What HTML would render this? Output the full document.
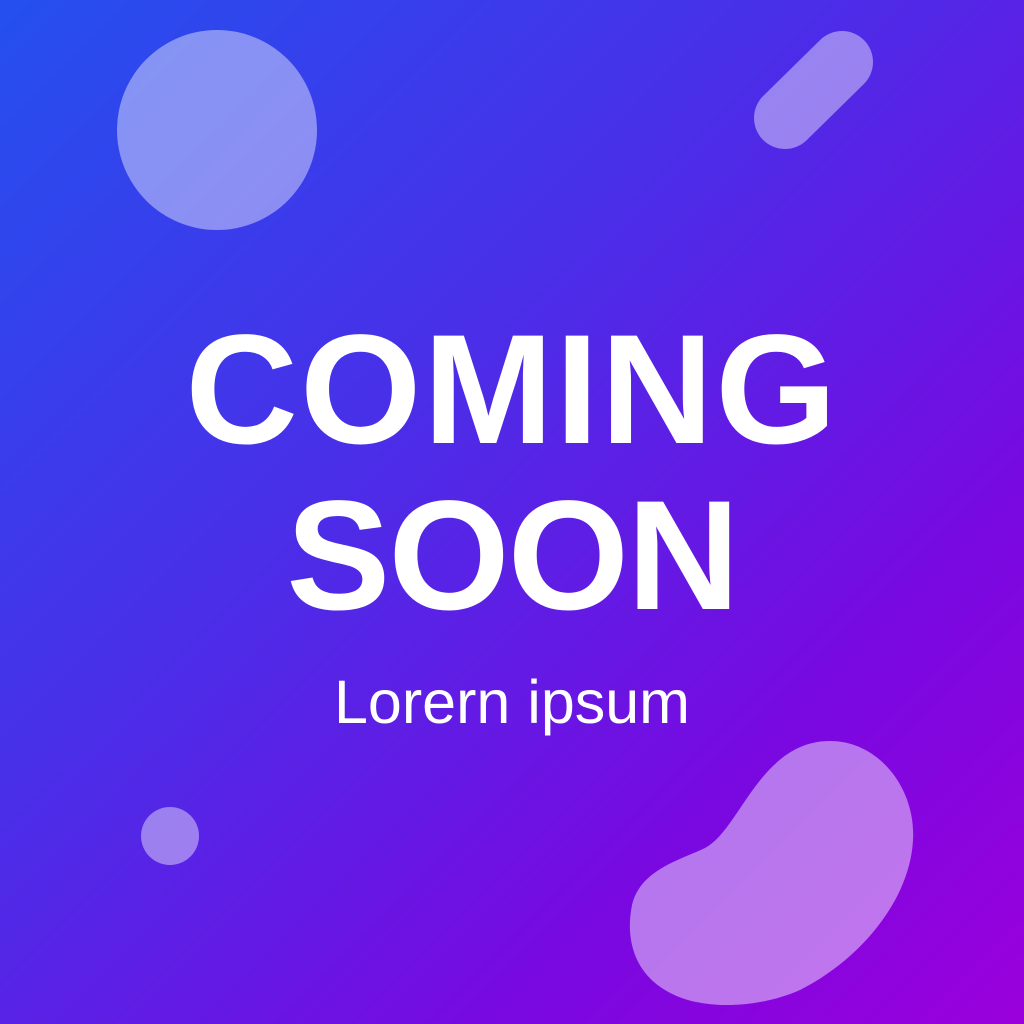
<!DOCTYPE html>
<html><head><style>
html,body{margin:0;padding:0}
body{width:1024px;height:1024px;overflow:hidden;position:relative;background:linear-gradient(135deg,#2450ef 0%,#4a2ee8 40%,#7a08e0 75%,#9a00dc 100%);font-family:"Liberation Sans",sans-serif}
.t{position:absolute;left:0;width:1024px;text-align:center;color:#fff;font-weight:bold;font-size:156px;line-height:1}
</style></head><body>
<svg width="1024" height="1024" style="position:absolute;left:0;top:0">
<circle cx="217" cy="130" r="100" fill="#fff" fill-opacity="0.42"/>
<line x1="785" y1="118" x2="842" y2="62" stroke="#fff" stroke-opacity="0.42" stroke-width="62" stroke-linecap="round"/>
<circle cx="170" cy="836" r="29" fill="#fff" fill-opacity="0.42"/>
<path d="M830 741 C880 741 916 790 913 840 C910 900 860 960 800 990 C760 1008 700 1012 665 990 C635 972 625 940 632 905 C640 870 680 860 705 848 C740 830 760 741 830 741 Z" fill="#fff" fill-opacity="0.45"/>
</svg>
<div class="t" style="top:312px;letter-spacing:2px">COMING</div>
<div class="t" style="top:478px;letter-spacing:-2px">SOON</div>
<div class="t" style="top:672px;font-size:61px;font-weight:normal">Lorern ipsum</div>
</body></html>
